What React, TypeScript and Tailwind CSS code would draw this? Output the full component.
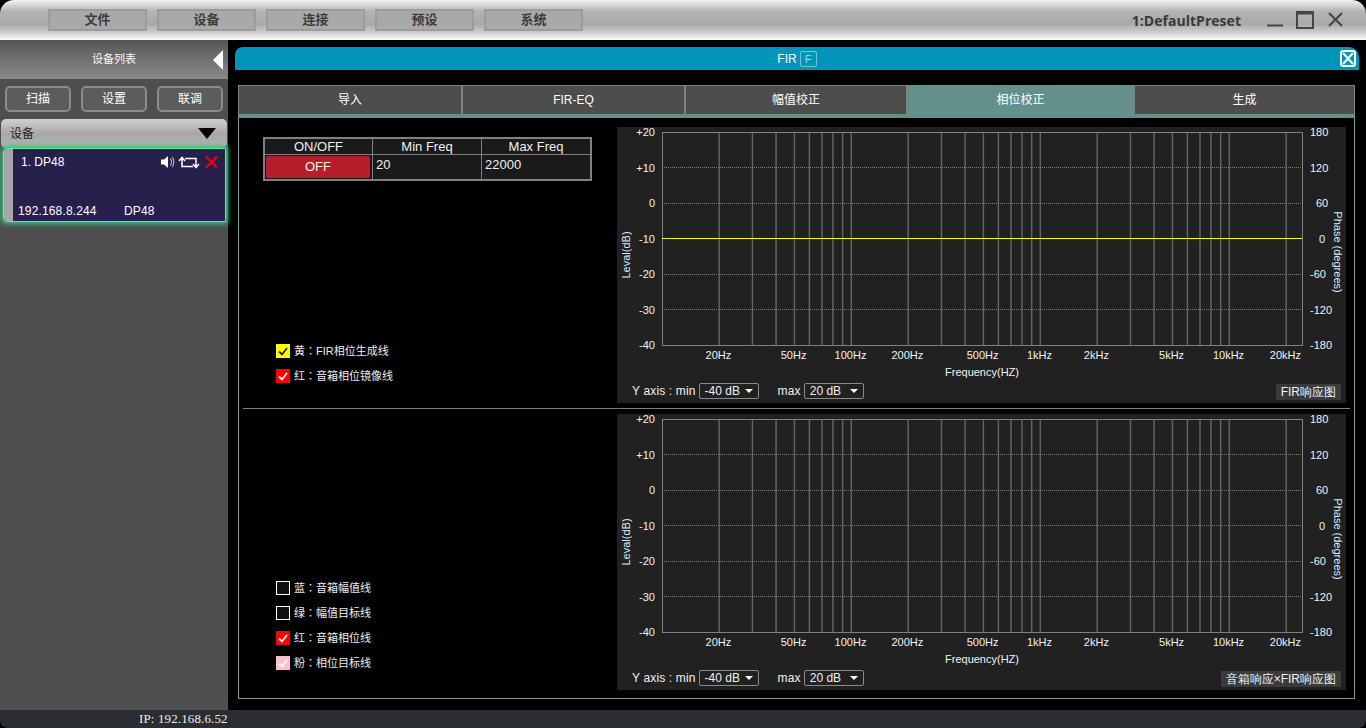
const menus = ["文件", "设备", "连接", "预设", "系统"];
const tabs = [
  { label: "导入", w: "w-[224px]" },
  { label: "FIR-EQ", w: "w-[223px]" },
  { label: "幅值校正", w: "w-[222px]" },
  { label: "相位校正", w: "w-[227px]", active: true },
  { label: "生成", w: "flex-1" },
];

const freqs = [20, 30, 40, 50, 60, 70, 80, 90, 100, 200, 300, 400, 500, 600, 700, 800, 900, 1000, 2000, 3000, 4000, 5000, 6000, 7000, 8000, 9000, 10000, 20000];
const freqLabels = [
  { t: "20Hz", f: 20 },
  { t: "50Hz", f: 50 },
  { t: "100Hz", f: 100 },
  { t: "200Hz", f: 200 },
  { t: "500Hz", f: 500 },
  { t: "1kHz", f: 1000 },
  { t: "2kHz", f: 2000 },
  { t: "5kHz", f: 5000 },
  { t: "10kHz", f: 10000 },
  { t: "20kHz", f: 20000 },
];
const dbLabels = ["+20", "+10", "0", "-10", "-20", "-30", "-40"];
const phaseLabels = ["180", "120", "60", "0", "-60", "-120", "-180"];

// plot frame inside the 729px wide panel
const fx = (f: number) => 45 + 189 * Math.log10(f / 10);

function Chart({ tag, line }: { tag: string; line?: boolean }) {
  const left = 45;
  const right = 685;
  const top = 5;
  const bottom = 218;
  const step = (bottom - top) / 6;
  return (
    <div className="w-[729px] h-[276px] bg-[#212121] flex flex-col">
      <svg width="729" height="256" className="block shrink-0" style={{ fontFamily: '"Liberation Sans", sans-serif' }}>
        {freqs.map((f) => (
          <line key={f} x1={fx(f) + 0.3} x2={fx(f) + 0.3} y1={top} y2={bottom} stroke="#626262" strokeWidth="1.5" />
        ))}
        {[1, 2, 3, 4, 5].map((i) => (
          <line key={i} x1={left} x2={right} y1={Math.floor(top + step * i) + 0.5} y2={Math.floor(top + step * i) + 0.5} stroke="#7c7c7c" strokeDasharray="1 1" />
        ))}
        <rect x={left + 0.5} y={top + 0.5} width={right - left} height={bottom - top} fill="none" stroke="#808080" />
        {line && <line x1={left} x2={right} y1="111.5" y2="111.5" stroke="#ffff00" />}
        {dbLabels.map((t, i) => (
          <text key={t} x="38" y={top + step * i + 4} textAnchor="end" fontSize="11" fill="#f2f2f2">{t}</text>
        ))}
        {phaseLabels.map((t, i) => (
          <text key={t} x={t.startsWith("-") ? 693 : t.length === 1 ? 702 : t.length === 2 ? 699 : 693} y={top + step * i + 4} fontSize="11" fill="#f2f2f2">{t}</text>
        ))}
        {freqLabels.map((l) => (
          <text key={l.t} x={fx(l.f) - 0.5} y="232" textAnchor="middle" fontSize="11" fill="#f2f2f2">{l.t}</text>
        ))}
        <text x="365" y="249" textAnchor="middle" fontSize="11" fill="#f2f2f2">Frequency(HZ)</text>
        <text transform="translate(13 128) rotate(-90)" textAnchor="middle" fontSize="11" fill="#d8ecff">Leval(dB)</text>
        <text transform="translate(717 125) rotate(90)" textAnchor="middle" fontSize="11" fill="#d8ecff">Phase (degrees)</text>
      </svg>
      <div className="flex items-start pl-[15px] text-[12px] text-[#f2f2f2] leading-[16px] font-['Liberation_Sans',sans-serif]">
        <span className="tracking-[0.15px]">Y axis : min</span>
        <span className="ml-[3px] w-[60px] h-[16px] border border-[#8a8a8a] rounded-[2px] flex items-center justify-between pl-[5px] pr-[5px]">
          -40 dB <Caret />
        </span>
        <span className="ml-[19px] tracking-[0.15px]">max</span>
        <span className="ml-[3px] w-[60px] h-[16px] border border-[#8a8a8a] rounded-[2px] flex items-center justify-between pl-[5px] pr-[5px]">
          20 dB <Caret />
        </span>
        <span className="ml-auto mr-[5px] mt-px h-[16px] px-[5px] bg-[#3a3a3a] text-[12px]">{tag}</span>
      </div>
    </div>
  );
}

function Caret() {
  return <span className="w-0 h-0 border-l-[4px] border-r-[4px] border-t-[4px] border-l-transparent border-r-transparent border-t-white" />;
}

function Legend({ label, color }: { label: string; color?: string }) {
  const check = color === "#ffff00" ? "#222" : "#fff";
  return (
    <div className="h-[14px] flex items-center gap-[4px] text-[11px] text-[#eee] font-['Liberation_Sans','Noto_Sans_CJK_TC',sans-serif]">
      <span
        className={`w-[14px] h-[14px] flex items-center justify-center ${color ? "" : "border border-white bg-[#111]"}`}
        style={color ? { background: color } : undefined}
      >
        {color && (
          <svg width="12" height="12" viewBox="0 0 12 12" fill="none">
            <path d="M2 6.5 L5 9.5 L10 3" stroke={check} strokeWidth="1.8" />
          </svg>
        )}
      </span>
      <span>{label}</span>
    </div>
  );
}

export default function App() {
  return (
    <div className="w-[1366px] h-[728px] overflow-hidden bg-black flex flex-col text-white font-['Liberation_Sans','Noto_Sans_CJK_SC',sans-serif]">
      {/* title bar */}
      <div className="h-[40px] shrink-0 rounded-t-[14px] bg-[linear-gradient(180deg,#f4f4f4_0%,#b4b4b4_28%,#a8a8a8_60%,#d0d0d0_82%,#fbfbfb_100%)] flex items-center pl-[48px] pr-[23px]">
        <div className="flex gap-[10px] -mt-px">
          {menus.map((m) => (
            <div key={m} className="w-[99px] h-[22px] border-2 border-[#9c9c9c] bg-[#a9a9a9] flex items-center justify-center text-[13px] font-bold text-[#3d3d3d]">
              {m}
            </div>
          ))}
        </div>
        <span className="ml-auto text-[14px] font-bold text-[#3a3a3a] font-['Open_Sans',sans-serif] tracking-[0.03px]">1:DefaultPreset</span>
        <svg width="76" height="20" viewBox="0 0 76 20" className="ml-[26px]" fill="none" stroke="#444">
          <path d="M0 15.5 H16" strokeWidth="2" />
          <rect x="30" y="2" width="16" height="16" strokeWidth="2" />
          <path d="M30 3 H46" strokeWidth="3" />
          <path d="M62 3 L75 16 M75 3 L62 16" strokeWidth="2" />
        </svg>
      </div>

      <div className="flex-1 flex min-h-0">
        {/* device sidebar */}
        <div className="w-[228px] shrink-0 bg-[#4f4f4f] flex flex-col">
          <div className="h-[39px] bg-[linear-gradient(180deg,#565656,#8a8a8a)] flex items-center justify-center relative text-[11px] text-[#f8f8f8]">
            设备列表
            <span className="absolute right-[5px] top-[10px] w-0 h-0 border-y-[10px] border-r-[10px] border-y-transparent border-r-white" />
          </div>
          <div className="h-[40px] bg-[#4e4e4e] flex items-center pl-[5px] gap-[10px]">
            {["扫描", "设置", "联调"].map((b) => (
              <div key={b} className="w-[66px] h-[26px] rounded-[5px] border-2 border-[#8c8c8c] bg-[#5c5c5c] flex items-center justify-center text-[12px]">
                {b}
              </div>
            ))}
          </div>
          <div className="ml-px w-[226px] h-[29px] rounded-[5px] bg-[linear-gradient(180deg,#d0d0d0,#a8a8a8_50%,#b4b4b4)] flex items-center justify-between pl-[9px] pr-[11px] text-[12px] text-[#222]">
            设备
            <span className="w-0 h-0 border-x-[9px] border-t-[11px] border-x-transparent border-t-black" />
          </div>
          <div className="ml-[3px] w-[223px] h-[74px] rounded-l-[4px] border border-[#4ff0a0] bg-[#27204d] shadow-[0_0_5px_2px_#2fc47c] flex text-[12px]">
            <div className="w-[9px] bg-[#a6a6a6] rounded-l-[3px] shrink-0" />
            <div className="flex-1 flex flex-col justify-between pl-[5px] pr-[5px] pt-[4px] pb-[1px]">
              <div className="flex items-center pl-[3px]">
                <span>1. DP48</span>
                <svg width="60" height="14" viewBox="0 0 60 14" className="ml-auto" fill="none">
                  <path d="M1 4.5 H4 L8 1 V13 L4 9.5 H1 Z" fill="#fff" />
                  <path d="M10.5 3.5 Q13 7 10.5 10.5 M12.5 2 Q15.5 7 12.5 12" stroke="#ccc" />
                  <path d="M22 3 V11.5 H33 M19 6 L22 2.5 L25 6 M36 12 V3.5 H25 M33 9 L36 12.5 L39 9" stroke="#fff" strokeWidth="1.5" />
                  <path d="M46 1.5 L57 12.5 M57 1.5 L46 12.5" stroke="#f00" strokeWidth="2" />
                </svg>
              </div>
              <div className="flex tracking-[0.15px]">
                <span className="w-[106px]">192.168.8.244</span>
                <span>DP48</span>
              </div>
            </div>
          </div>
        </div>

        {/* FIR window */}
        <div className="flex-1 pl-[7px] pr-[7px] pt-[7px] flex flex-col">
          <div className="h-[23px] rounded-tl-[8px] rounded-tr-[10px] bg-[#0095b9] flex items-center justify-center relative text-[12px]">
            <span>FIR</span>
            <span className="ml-[3px] w-[17px] h-[16px] border border-[#6fc5da] rounded-[2px] text-[#9fdbe9] text-[11px] leading-[14px] text-center">F</span>
            <span className="absolute right-[3px] top-[3px] w-[16px] h-[17px] border-2 border-white rounded-[3px] flex items-center justify-center">
              <svg width="12" height="13" viewBox="0 0 12 13" fill="none" stroke="#fff" strokeWidth="2">
                <path d="M1 1 L11 12 M11 1 L1 12" />
              </svg>
            </span>
          </div>

          <div className="mt-[15px] ml-[3px] mr-[4px] h-[614px] border-x border-b border-[#7d9a98] flex flex-col">
            <div className="flex h-[33px] border-b-[4px] border-[#64908c] -mx-px shrink-0">
              {tabs.map((t) => (
                <div
                  key={t.label}
                  className={`${t.w} h-[29px] flex items-center justify-center text-[12px] ${t.active ? "bg-[#64908c]" : "bg-[#4d4d4d] border border-[#808080] border-b-0"}`}
                >
                  {t.label}
                </div>
              ))}
            </div>

            <div className="flex-1 flex flex-col pt-[9px]">
              <div className="flex h-[276px]">
                <div className="w-[378px] shrink-0 pl-[24px] flex flex-col pt-[10px]">
                  <div className="w-[329px] border-2 border-[#808080] bg-[#1a1a1a] text-[13px] text-[#f0f0f0]">
                    <div className="grid grid-cols-[107px_109px_1fr] h-[16px] leading-[16px] text-center border-b border-[#808080]">
                      <span>ON/OFF</span>
                      <span className="border-l border-[#808080]">Min Freq</span>
                      <span className="border-l border-[#808080]">Max Freq</span>
                    </div>
                    <div className="grid grid-cols-[107px_109px_1fr] h-[24px]">
                      <div className="pl-[1px] pt-[1px]">
                        <div className="w-[104px] h-[22px] bg-[#b41f2b] rounded-[2px] flex items-center justify-center">OFF</div>
                      </div>
                      <span className="border-l border-[#808080] pl-[3px]">20</span>
                      <span className="border-l border-[#808080] pl-[3px]">22000</span>
                    </div>
                  </div>
                  <div className="mt-[163px] ml-[13px] flex flex-col gap-[11px]">
                    <Legend label="黄：FIR相位生成线" color="#ffff00" />
                    <Legend label="红：音箱相位镜像线" color="#ff0000" />
                  </div>
                </div>
                <Chart tag="FIR响应图" line />
              </div>

              <div className="ml-[4px] mr-[4px] mt-[5px] mb-[5px] h-px bg-[#7f7f7f]" />

              <div className="flex h-[276px]">
                <div className="w-[378px] shrink-0 pl-[37px] pt-[167px] flex flex-col gap-[11px]">
                  <Legend label="蓝：音箱幅值线" />
                  <Legend label="绿：幅值目标线" />
                  <Legend label="红：音箱相位线" color="#ff0000" />
                  <Legend label="粉：相位目标线" color="#ffc0cb" />
                </div>
                <Chart tag="音箱响应×FIR响应图" />
              </div>
            </div>
          </div>
        </div>
      </div>

      {/* status strip */}
      <div className="h-[18px] shrink-0 bg-[#2a2d32] rounded-b-[8px] text-[13px] text-[#eee] leading-[18px] pl-[139px] tracking-[0.13px] font-['Liberation_Serif',serif]">
        IP: 192.168.6.52
      </div>
    </div>
  );
}
